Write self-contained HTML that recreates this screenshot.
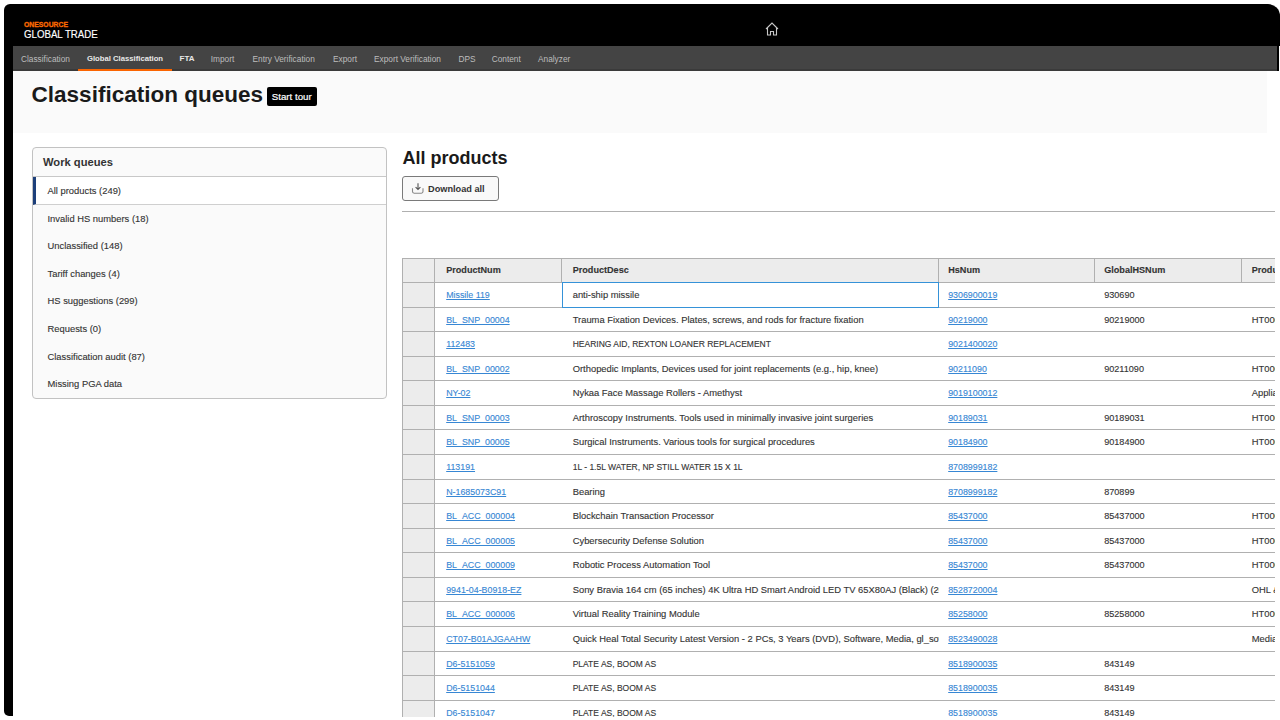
<!DOCTYPE html>
<html><head><meta charset="utf-8">
<style>
*{box-sizing:border-box;margin:0;padding:0}
html,body{width:1280px;height:720px;overflow:hidden;background:#fff;font-family:"Liberation Sans",sans-serif;color:#333}
.abs{position:absolute}
#lstrip{position:absolute;left:4px;top:45px;width:9px;height:671px;background:#000;border-radius:0 0 0 5px}
#rstrip{position:absolute;left:1276px;top:45px;width:2.5px;height:26px;background:#000}
#topbar{position:absolute;left:4px;top:4px;width:1275.5px;height:42px;background:#000;border-radius:6px 12px 0 0}
#nav{position:absolute;left:13px;top:46px;width:1263.5px;height:25px;background:#444;border-bottom:2px solid #3a3a3a}
#nav span{position:absolute;top:8px;font-size:8.3px;color:#bdbdbd;white-space:nowrap;line-height:10px}
#nav span.b{font-weight:bold;color:#e8e8e8}
#ul{position:absolute;left:78px;top:69px;width:94px;height:2.5px;background:#fa6400}
#content{position:absolute;left:13px;top:71px;width:1262px;height:645.5px;background:#fff;overflow:hidden}
#hdr{position:absolute;left:0;top:0;width:1254px;height:62px;background:#fafafa}
#wq{position:absolute;left:19px;top:76px;width:354.5px;height:252px;border:1px solid #c2c2c2;border-radius:4px;background:#fafafa;overflow:hidden}
#wqh{position:absolute;left:0;top:0;width:100%;height:29px;border-bottom:1px solid #c8c8c8;font-size:11.2px;font-weight:bold;color:#333;line-height:28px;padding-left:10px}
.q{height:27.6px;line-height:27.6px;font-size:9.4px;color:#333;padding-left:14.5px;white-space:nowrap}
.q:nth-child(2){margin-top:29px}
.q.sel{background:#fff;border-left:3px solid #1d3f7a;padding-left:11.5px;border-bottom:1px solid #cfcfcf}
#dl{position:absolute;left:389px;top:104.8px;width:97px;height:25px;border:1.6px solid #7a7a7a;border-radius:3px;background:#f9f9f9}
#dl span{position:absolute;left:25px;top:1.2px;line-height:23px;font-size:9.2px;font-weight:bold;color:#333;white-space:nowrap}
#tbl{position:absolute;left:389.2px;top:186.5px;width:880px;height:470px;border-top:1px solid #b0b0b0;border-left:1px solid #b0b0b0;overflow:hidden}
.tr{position:absolute;left:0;width:880px;height:24.57px;border-bottom:1px solid #b0b0b0}
.tr .rh{position:absolute;left:0;top:0;width:31.5px;height:100%;background:#ececec;border-right:1px solid #b0b0b0}
.th{height:24.5px;background:#ececec}
.c{position:absolute;top:0;height:100%;line-height:24.2px;font-size:9.4px;color:#333;white-space:nowrap;overflow:hidden;padding-left:11px}
.c1{left:32px;width:127px}
.c2{left:159.5px;width:376px;padding-left:10px}
.c3{left:535.5px;width:156px;padding-left:9.5px}
.c4{left:691.5px;width:147px;padding-left:9.5px}
.c5{left:838.5px;width:300px;padding-left:10px}
.th .c{font-weight:bold;font-size:9.1px;color:#333;border-right:1px solid #b0b0b0;line-height:22.5px}
.th .c5{border-right:none}
.c a{color:#3787d4;text-decoration:underline;font-size:8.85px}
.c3,.c4{font-size:9.1px}
.c.up{font-size:8.5px}
#selc{position:absolute;left:159px;top:23.5px;width:377px;height:26px;border:1.5px solid #3592d8}
.c,.q{-webkit-text-stroke:0.12px currentColor}
</style></head><body>
<div id="topbar"></div>
<div id="lstrip"></div>
<div id="rstrip"></div>
<div class="abs" style="left:24px;top:21.2px;font-size:7.5px;font-weight:bold;color:#ff6a00;line-height:8px;transform:scaleX(0.91);transform-origin:0 0;-webkit-text-stroke:0.3px #ff6a00">ONESOURCE</div>
<div class="abs" style="left:24px;top:29px;font-size:10.3px;color:#fff;line-height:11px;transform:scaleX(0.94);transform-origin:0 0;-webkit-text-stroke:0.15px #fff">GLOBAL TRADE</div>
<svg class="abs" style="left:764px;top:21px" width="16" height="16" viewBox="0 0 16 16"><path d="M2 8 L8 2 L14 8 M3.5 6.5 V14 H6.5 V10.5 H9.5 V14 H12.5 V6.5" fill="none" stroke="#c8c8c8" stroke-width="1.1"/></svg>
<div id="nav">
<span style="left:8px">Classification</span>
<span class="b" style="left:74px;font-size:7.7px">Global Classification</span>
<span class="b" style="left:166.5px;font-size:8px">FTA</span>
<span style="left:197.7px">Import</span>
<span style="left:239.5px">Entry Verification</span>
<span style="left:320px">Export</span>
<span style="left:361px">Export Verification</span>
<span style="left:445.5px">DPS</span>
<span style="left:478.7px">Content</span>
<span style="left:525px">Analyzer</span>
</div>
<div id="ul"></div>
<div id="content">
<div id="hdr"></div>
<div class="abs" style="left:18.6px;top:10.8px;font-size:22.5px;font-weight:bold;color:#1a1a1a;line-height:26px;white-space:nowrap">Classification queues</div>
<div class="abs" style="left:253.5px;top:16px;width:50.5px;height:19px;background:#000;border-radius:2px;color:#fff;font-size:9.7px;line-height:20.5px;text-align:center;-webkit-text-stroke:0.2px #fff">Start tour</div>
<div id="wq">
<div id="wqh">Work queues</div>
<div class="q sel">All products (249)</div>
<div class="q">Invalid HS numbers (18)</div>
<div class="q">Unclassified (148)</div>
<div class="q">Tariff changes (4)</div>
<div class="q">HS suggestions (299)</div>
<div class="q">Requests (0)</div>
<div class="q">Classification audit (87)</div>
<div class="q">Missing PGA data</div>
</div>
<div class="abs" style="left:389.5px;top:76px;font-size:18px;font-weight:bold;color:#1a1a1a;line-height:22px;white-space:nowrap">All products</div>
<div id="dl"><svg class="abs" style="left:7.5px;top:6.6px" width="14" height="12" viewBox="0 0 14 12"><path d="M7 0.3 V6.5 M4.6 4.1 L7 6.5 L9.4 4.1" fill="none" stroke="#555" stroke-width="1.1"/><path d="M1.5 5.3 V8.6 Q1.5 10.2 3.1 10.2 H10.4 Q12 10.2 12 8.6 V5.3" fill="none" stroke="#888" stroke-width="1.1"/></svg><span>Download all</span></div>
<div class="abs" style="left:389px;top:140px;width:880px;height:1px;background:#b0b0b0"></div>
<div id="tbl">
<div class="tr th" style="top:0px"><div class="rh"></div><div class="c c1">ProductNum</div><div class="c c2">ProductDesc</div><div class="c c3">HsNum</div><div class="c c4">GlobalHSNum</div><div class="c c5">ProductType</div></div>
<div class="tr" style="top:24.50px"><div class="rh"></div><div class="c c1"><a>Missile 119</a></div><div class="c c2">anti-ship missile</div><div class="c c3"><a>9306900019</a></div><div class="c c4">930690</div><div class="c c5"></div></div>
<div class="tr" style="top:49.07px"><div class="rh"></div><div class="c c1"><a>BL_SNP_00004</a></div><div class="c c2">Trauma Fixation Devices. Plates, screws, and rods for fracture fixation</div><div class="c c3"><a>90219000</a></div><div class="c c4">90219000</div><div class="c c5">HT0004</div></div>
<div class="tr" style="top:73.64px"><div class="rh"></div><div class="c c1"><a>112483</a></div><div class="c c2 up">HEARING AID, REXTON LOANER REPLACEMENT</div><div class="c c3"><a>9021400020</a></div><div class="c c4"></div><div class="c c5"></div></div>
<div class="tr" style="top:98.21px"><div class="rh"></div><div class="c c1"><a>BL_SNP_00002</a></div><div class="c c2">Orthopedic Implants, Devices used for joint replacements (e.g., hip, knee)</div><div class="c c3"><a>90211090</a></div><div class="c c4">90211090</div><div class="c c5">HT0002</div></div>
<div class="tr" style="top:122.78px"><div class="rh"></div><div class="c c1"><a>NY-02</a></div><div class="c c2">Nykaa Face Massage Rollers - Amethyst</div><div class="c c3"><a>9019100012</a></div><div class="c c4"></div><div class="c c5">Appliance</div></div>
<div class="tr" style="top:147.35px"><div class="rh"></div><div class="c c1"><a>BL_SNP_00003</a></div><div class="c c2">Arthroscopy Instruments. Tools used in minimally invasive joint surgeries</div><div class="c c3"><a>90189031</a></div><div class="c c4">90189031</div><div class="c c5">HT0003</div></div>
<div class="tr" style="top:171.92px"><div class="rh"></div><div class="c c1"><a>BL_SNP_00005</a></div><div class="c c2">Surgical Instruments. Various tools for surgical procedures</div><div class="c c3"><a>90184900</a></div><div class="c c4">90184900</div><div class="c c5">HT0005</div></div>
<div class="tr" style="top:196.49px"><div class="rh"></div><div class="c c1"><a>113191</a></div><div class="c c2 up">1L - 1.5L WATER, NP STILL WATER 15 X 1L</div><div class="c c3"><a>8708999182</a></div><div class="c c4"></div><div class="c c5"></div></div>
<div class="tr" style="top:221.06px"><div class="rh"></div><div class="c c1"><a>N-1685073C91</a></div><div class="c c2">Bearing</div><div class="c c3"><a>8708999182</a></div><div class="c c4">870899</div><div class="c c5"></div></div>
<div class="tr" style="top:245.63px"><div class="rh"></div><div class="c c1"><a>BL_ACC_000004</a></div><div class="c c2">Blockchain Transaction Processor</div><div class="c c3"><a>85437000</a></div><div class="c c4">85437000</div><div class="c c5">HT0004</div></div>
<div class="tr" style="top:270.20px"><div class="rh"></div><div class="c c1"><a>BL_ACC_000005</a></div><div class="c c2">Cybersecurity Defense Solution</div><div class="c c3"><a>85437000</a></div><div class="c c4">85437000</div><div class="c c5">HT0005</div></div>
<div class="tr" style="top:294.77px"><div class="rh"></div><div class="c c1"><a>BL_ACC_000009</a></div><div class="c c2">Robotic Process Automation Tool</div><div class="c c3"><a>85437000</a></div><div class="c c4">85437000</div><div class="c c5">HT0009</div></div>
<div class="tr" style="top:319.34px"><div class="rh"></div><div class="c c1"><a>9941-04-B0918-EZ</a></div><div class="c c2">Sony Bravia 164 cm (65 inches) 4K Ultra HD Smart Android LED TV 65X80AJ (Black) (2021 Model)</div><div class="c c3"><a>8528720004</a></div><div class="c c4"></div><div class="c c5">OHL &amp; Co</div></div>
<div class="tr" style="top:343.91px"><div class="rh"></div><div class="c c1"><a>BL_ACC_000006</a></div><div class="c c2">Virtual Reality Training Module</div><div class="c c3"><a>85258000</a></div><div class="c c4">85258000</div><div class="c c5">HT0006</div></div>
<div class="tr" style="top:368.48px"><div class="rh"></div><div class="c c1"><a>CT07-B01AJGAAHW</a></div><div class="c c2">Quick Heal Total Security Latest Version - 2 PCs, 3 Years (DVD), Software, Media, gl_software</div><div class="c c3"><a>8523490028</a></div><div class="c c4"></div><div class="c c5">Media</div></div>
<div class="tr" style="top:393.05px"><div class="rh"></div><div class="c c1"><a>D6-5151059</a></div><div class="c c2 up">PLATE AS, BOOM AS</div><div class="c c3"><a>8518900035</a></div><div class="c c4">843149</div><div class="c c5"></div></div>
<div class="tr" style="top:417.62px"><div class="rh"></div><div class="c c1"><a>D6-5151044</a></div><div class="c c2 up">PLATE AS, BOOM AS</div><div class="c c3"><a>8518900035</a></div><div class="c c4">843149</div><div class="c c5"></div></div>
<div class="tr" style="top:442.19px"><div class="rh"></div><div class="c c1"><a>D6-5151047</a></div><div class="c c2 up">PLATE AS, BOOM AS</div><div class="c c3"><a>8518900035</a></div><div class="c c4">843149</div><div class="c c5"></div></div>
<div id="selc"></div>
</div>

</div>
</body></html>
